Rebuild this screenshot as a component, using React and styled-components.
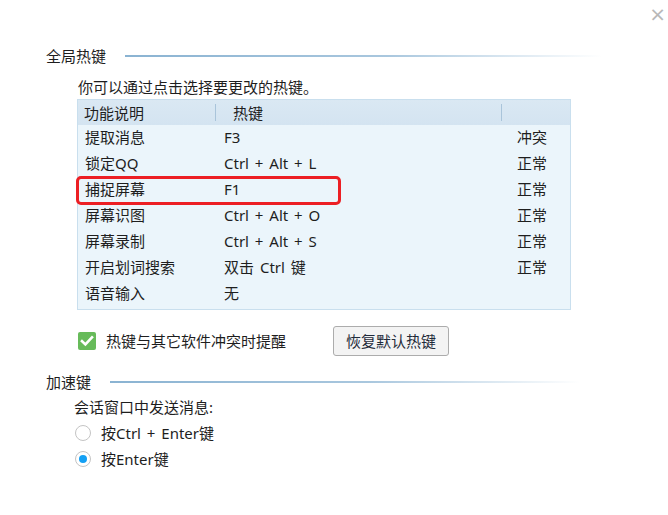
import React from "react";
import styled, { createGlobalStyle } from "styled-components";

const Global = createGlobalStyle`
  html, body {
    margin: 0;
    padding: 0;
    background: #fff;
  }
  body {
    font-family: "Noto Sans", "Noto Sans CJK SC", sans-serif;
    font-size: 15px;
    color: #1e1e1e;
  }
`;

const rows = [
  { name: "提取消息", key: "F3", state: "冲突" },
  { name: "锁定QQ", key: "Ctrl + Alt + L", state: "正常" },
  { name: "捕捉屏幕", key: "F1", state: "正常", marked: true },
  { name: "屏幕识图", key: "Ctrl + Alt + O", state: "正常" },
  { name: "屏幕录制", key: "Ctrl + Alt + S", state: "正常" },
  { name: "开启划词搜索", key: "双击 Ctrl 键", state: "正常" },
  { name: "语音输入", key: "无", state: "" },
];

const App = () => {
  return (
    <Panel>
      <Global />
      <Close>×</Close>

      <SectionHead $top={46}>
        <span>全局热键</span>
        <Rule />
      </SectionHead>

      <Hint>你可以通过点击选择要更改的热键。</Hint>

      <Table>
        <HeadRow>
          <HeadCell $w={137}>功能说明</HeadCell>
          <Divider />
          <HeadCell $w={285} $pad={17}>热键</HeadCell>
          <Divider />
          <HeadCell />
        </HeadRow>
        {rows.map((r) => (
          <Row key={r.name} $marked={r.marked}>
            <Cell $w={140} $pad={7}>{r.name}</Cell>
            <Cell $w={299}>{r.key}</Cell>
            <Cell $pad={0}>{r.state}</Cell>
          </Row>
        ))}
      </Table>

      <Options>
        <CheckLabel>
          <CheckBox>
            <svg width="14" height="12" viewBox="0 0 14 12">
              <path d="M2 6.2 L5.4 9.4 L12 2.4" fill="none" stroke="#fff" strokeWidth="2.6" strokeLinecap="square" />
            </svg>
          </CheckBox>
          热键与其它软件冲突时提醒
        </CheckLabel>
        <Button>恢复默认热键</Button>
      </Options>

      <SectionHead $top={17} $width={534}>
        <span>加速键</span>
        <Rule />
      </SectionHead>

      <SubLabel>会话窗口中发送消息:</SubLabel>
      <Radio>
        <RadioDot />
        按Ctrl + Enter键
      </Radio>
      <Radio>
        <RadioDot $on />
        按Enter键
      </Radio>
    </Panel>
  );
};

export default App;

const Panel = styled.div`
  position: relative;
  width: 668px;
  height: 515px;
  box-sizing: border-box;
  padding: 0 0 0 46px;
  overflow: hidden;
`;

const Close = styled.div`
  position: absolute;
  right: 2px;
  top: 2px;
  font-size: 20px;
  line-height: 24px;
  color: #b8b8b8;
  font-family: "DejaVu Sans", sans-serif;
`;

const SectionHead = styled.div`
  display: flex;
  align-items: center;
  gap: 19px;
  padding-top: ${(p) => p.$top}px;
  width: ${(p) => p.$width ?? 556}px;
  height: 20px;
  line-height: 20px;
  span {
    white-space: nowrap;
  }
`;

const Rule = styled.div`
  flex: 1;
  height: 2px;
  background: linear-gradient(to right, #8ab3d2 0%, #a9c7de 55%, #ffffff 100%);
`;

const Hint = styled.div`
  margin: 11px 0 0 32px;
  line-height: 20px;
`;

const Table = styled.div`
  margin: 2px 0 0 31px;
  width: 494px;
  box-sizing: border-box;
  border: 1px solid #c9dfee;
  background: #ebf5fb;
  padding-bottom: 2px;
`;

const HeadRow = styled.div`
  display: flex;
  align-items: center;
  height: 25px;
  background: linear-gradient(to bottom, #dae8f3, #d4e4f1);
`;

const HeadCell = styled.div`
  width: ${(p) => (p.$w ? `${p.$w}px` : "auto")};
  flex: ${(p) => (p.$w ? "none" : 1)};
  box-sizing: border-box;
  padding-left: ${(p) => p.$pad ?? 6}px;
  line-height: 24px;
`;

const Divider = styled.div`
  width: 1px;
  height: 17px;
  background: #a9c4da;
`;

const Row = styled.div`
  position: relative;
  display: flex;
  height: 26px;
  line-height: 24px;
  &::after {
    content: "";
    display: ${(p) => (p.$marked ? "block" : "none")};
    position: absolute;
    left: -2px;
    top: -1px;
    width: 265px;
    height: 29px;
    box-sizing: border-box;
    border: 3px solid #ec1f24;
    border-radius: 5px;
  }
`;

const Cell = styled.div`
  width: ${(p) => (p.$w ? `${p.$w}px` : "auto")};
  flex: ${(p) => (p.$w ? "none" : 1)};
  box-sizing: border-box;
  padding-left: ${(p) => p.$pad ?? 6}px;
  white-space: nowrap;
  word-spacing: 2px;
`;

const Options = styled.div`
  display: flex;
  align-items: center;
  margin: 16px 0 0 32px;
  height: 29px;
`;

const CheckLabel = styled.label`
  display: flex;
  align-items: center;
  gap: 10px;
  width: 255px;
`;

const CheckBox = styled.span`
  display: inline-flex;
  align-items: center;
  justify-content: center;
  width: 18px;
  height: 18px;
  border-radius: 2px;
  background: #67bb5a;
`;

const Button = styled.button`
  width: 116px;
  height: 30px;
  border: 1px solid #acacac;
  border-radius: 3px;
  background: #f3f3f3;
  font-family: "Noto Sans", "Noto Sans CJK SC", sans-serif;
  font-size: 15px;
  color: #1f2b3a;
  padding: 0;
`;

const SubLabel = styled.div`
  margin: 5px 0 0 28px;
  line-height: 20px;
`;

const Radio = styled.label`
  display: flex;
  align-items: center;
  gap: 10px;
  margin: 5px 0 0 29px;
  height: 21px;
  word-spacing: 2px;
`;

const RadioDot = styled.span`
  position: relative;
  width: 16px;
  height: 16px;
  box-sizing: border-box;
  border-radius: 50%;
  border: 1px solid #c4c4c4;
  background: #fff;
  &::after {
    content: "";
    display: ${(p) => (p.$on ? "block" : "none")};
    position: absolute;
    left: 3px;
    top: 3px;
    width: 8px;
    height: 8px;
    border-radius: 50%;
    background: #14a0f4;
  }
`;
